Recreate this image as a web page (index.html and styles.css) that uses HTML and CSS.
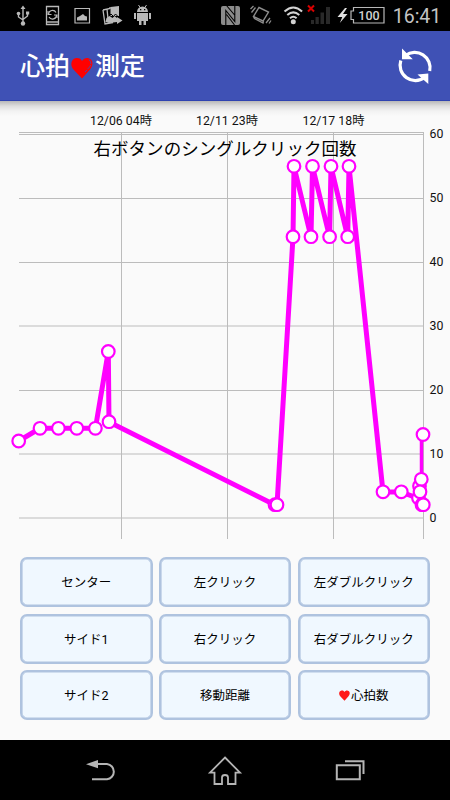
FILE: index.html
```html
<!DOCTYPE html>
<html lang="ja">
<head>
<meta charset="utf-8">
<title>心拍測定</title>
<link rel="stylesheet" href="styles.css">
</head>
<body>
<div class="screen">
  <div class="status">
    <svg class="notices" viewBox="0 0 160 31" fill="none" stroke="#b9b9b9">
      <g stroke-width="1.4"><path d="M23 8v15M18.500 13v4l4.500 3M27.500 13v3l-4.500 3.500"/><g fill="#b9b9b9" stroke="none"><path d="M20.500 9 23 5.500 25.500 9zM26 11.500h3.200v3H26z"/><circle cx="18.500" cy="13.500" r="1.800"/><circle cx="23" cy="23.500" r="2.200"/></g></g>
      <path d="M46.500 6.500h12v18h-12zM46.500 22h12" stroke-width="1.300"/>
      <path d="M48.500 14a4 4 0 0 1 7.500-1.500M56.500 15a4 4 0 0 1-7.500 2" stroke-width="1.200"/>
      <path d="M48 11v3.500h3.500M57 18v-3h-3" stroke-width="1.100"/>
      <path d="M75 8.500h14.500v14.500H75z" stroke-width="1.200"/><path d="M77 20.500v-3l3-1.500 3-2 2 2 2 .5v4z" fill="#b9b9b9" stroke="none"/>
      <path d="m110.500 7 8.500-1v10h-8.500z" fill="#b9b9b9" stroke="none"/><path d="m103 10 7-1.500V7M103 10l2 14 8-1.500M107 9l1 10" stroke-width="1.300"/>
      <path d="m105.500 22 1-4 3-2 3 2 2-2 2.500 2v-1l5.500 3.500-5.500 3.500v-2l-8 1z" fill="#b9b9b9" stroke="none"/><path d="m109 16 2-2 2.500 2.500 2-2.500 2.500 2.500" stroke="#000" stroke-width="1"/>
      <path d="M137 12a5.500 5.500 0 0 1 11 0zM137 13h11v8h-2v4h-2.500v-4h-2v4H139v-4h-2zM134 13h2v6h-2zM149 13h2v6h-2z" fill="#b9b9b9" stroke="none"/><path d="m138.500 5 2 3M146.500 5l-2 3" stroke-width="1"/><path d="M140 9h1.300v1.200H140zM144 9h1.300v1.200H144z" fill="#000" stroke="none"/>
    </svg>
    <svg class="signals" viewBox="216 0 234 31">
      <path d="M223 6h15q2 0 2 2v15q0 2-2 2h-15q-2 0-2-2V8q0-2 2-2z" fill="#8c8c8c"/><path d="M225.800 25V10.500l9 11V6M226.500 5.500l8.500 10M226.500 14.500l8 10.500" fill="none" stroke="#000" stroke-width="1.100"/>
      <g fill="none" stroke="#8c8c8c"><path d="m259 7.500 9.500 4.500-5.500 9-9.500-4.500zM253.500 16.500l1 2 8.500 4.500.5-2" stroke-width="1.400"/><path d="m250.500 9 3-3M251.500 12.500l4-5M266 23l4-5M269 23.500l2-3" stroke-width="1.300"/></g>
      <g fill="none" stroke="#d2d2d2" stroke-width="2"><path d="M284.500 11.500q8.800-8 17.600 0M287.300 15q6-5.200 12 0M290 18.300q3.300-3 6.600 0"/></g><circle cx="293.300" cy="21.800" r="2.500" fill="#d2d2d2"/>
      <path d="m308 5.500 6 6m0-6-6 6" stroke="#d80000" stroke-width="2"/><path d="M311 20h3v4h-3zM315.500 17h3.300v7h-3.300zM320.500 12.500h3.500V24h-3.500zM326 7h4v17h-4z" fill="#292929"/>
      <path d="m345 8-7.500 9h4.800l-2.500 6 7.700-9h-4.500l4-6z" fill="#e0e0e0"/>
      <path d="M353.500 7.500h30.500v15.500h-30.500v-3.500H351v-8.500h2.500z" fill="none" stroke="#b8b8b8" stroke-width="1.200"/>
      <text class="battery" x="369" y="19.500">100</text>
      <text class="clock" x="417" y="23">16:41</text>
    </svg>
  </div>
  <header class="bar">
    <h1>心拍<svg class="heart" viewBox="0 0 22 22"><path d="M11 21.500 2 12C-1 8 0 2 5 1c3-.4 5 .7 6 3 2-3.500 6-4 9-1.500 2.500 3 1.500 7-1 10z" fill="#f00"/><path d="M18 2.500q3.500 3.500.5 7.500l-4.500 5" fill="none" stroke="#3f51b5" stroke-width=".9" stroke-dasharray="5 1"/></svg>測定</h1>
    <svg class="sync" viewBox="0 0 36 36"><g fill="none" stroke="#fff" stroke-width="3.200"><path d="M8.500 7.500A15.300 15.300 0 0 1 32.700 23"/><path d="M27.500 29.500A15.300 15.300 0 0 1 3.800 12.500"/></g><path d="M5 .5 5 11.300 15.800 11.300zM31.300 36V25.500L20.500 26.500z" fill="#fff"/></svg>
  </header>
  <main>
    <svg class="chart" viewBox="0 101 450 447">
      <g class="grid"><path d="M19 132.500h404.500M19 134.500h404.500M19 198.500h404.500M19 262.500h404.500M19 326h404.500M19 390.500h404.500M19 454h404.500M19 518h404.500M121.500 133v406M227.500 133v406M333.500 133v406M423.500 132v407"/></g>
      <g class="axis middle"><text x="121" y="124.500" textLength="62">12/06 04時</text><text x="227" y="124.500" textLength="62">12/11 23時</text><text x="333.500" y="124.500" textLength="62">12/17 18時</text></g>
      <g class="axis"><text x="429.500" y="138">60</text><text x="429.500" y="202">50</text><text x="429.500" y="266">40</text><text x="429.500" y="330">30</text><text x="429.500" y="394">20</text><text x="429.500" y="458">10</text><text x="429.500" y="521.500">0</text></g>
      <path class="line" d="M18.700 441 40 428.300H95.400L108.300 351.500 109 422 275 505 277 505 293 237 294 166.500 311 237 312.500 166.500 329.600 237 331 166.500 347.700 237 349 166.500 383 492H401L417.500 498 419 486 421 479 420 492 422 505 423 505"/>
      <path class="line thin" d="M421.500 479V434.500"/>
      <g class="dots">
        <circle cx="18.700" cy="441" r="6.300"/><circle cx="40" cy="428.300" r="6.300"/><circle cx="58.400" cy="428.300" r="6.300"/><circle cx="76.800" cy="428.300" r="6.300"/><circle cx="95.400" cy="428.300" r="6.300"/><circle cx="108.300" cy="351.500" r="6.300"/><circle cx="109" cy="421.700" r="6.300"/><circle cx="275" cy="504.700" r="6.300"/><circle cx="277" cy="504.700" r="6.300"/>
        <circle cx="293" cy="236.700" r="6.300"/><circle cx="294" cy="166.300" r="6.300"/><circle cx="311" cy="236.700" r="6.300"/><circle cx="312.500" cy="166.300" r="6.300"/><circle cx="329.600" cy="236.700" r="6.300"/><circle cx="331" cy="166.300" r="6.300"/><circle cx="347.700" cy="236.700" r="6.300"/><circle cx="349" cy="166.300" r="6.300"/>
        <circle cx="383" cy="491.800" r="6.300"/><circle cx="401.300" cy="491.800" r="6.300"/><circle cx="418.500" cy="498" r="6.300"/><circle cx="419.500" cy="486" r="6.300"/><circle cx="421.300" cy="479.300" r="6.300"/><circle cx="420" cy="491.800" r="6.300"/><circle cx="422" cy="504.700" r="6.300"/><circle cx="423.300" cy="504.700" r="6.300"/><circle cx="423" cy="434.500" r="6.300"/>
      </g>
      <text class="caption" x="225" y="155" textLength="263">右ボタンのシングルクリック回数</text>
    </svg>
    <div class="buttons">
      <button>センター</button><button>左クリック</button><button>左ダブルクリック</button>
      <button>サイド1</button><button>右クリック</button><button>右ダブルクリック</button>
      <button>サイド2</button><button>移動距離</button><button><svg class="mini" viewBox="0 0 22 22"><path d="M11 21.500 2 12C-1 8 0 2 5 1c3-.4 5 .7 6 3 2-3.500 6-4 9-1.500 2.500 3 1.500 7-1 10z" fill="#ff1717"/></svg>心拍数</button>
    </div>
  </main>
  <nav>
    <svg viewBox="0 0 450 60" fill="none" stroke="#b5b5b5" stroke-width="2"><path d="M95 24h12a7.700 7.700 0 0 1 0 15.300H92"/><path d="M86 24.200 98 20v8.200z" fill="#b5b5b5" stroke="none"/><path d="m225 17.500 15 15.200h-4.500V44H228v-6.500q0-2.500-3-2.500t-3 2.500V44h-7.500V32.700H210z" stroke-width="1.800"/><path d="M336.800 25.200h23v14h-23zM345 21.300h18.500V34"/></svg>
  </nav>
</div>
</body>
</html>
```
FILE: styles.css
```css
body {
  margin: 0;
  font-family: Roboto, "Noto Sans CJK JP", sans-serif;
}

.screen {
  display: flex;
  flex-direction: column;
  width: 450px;
  height: 800px;
  overflow: hidden;
  background: #fafafa;
}

.status {
  display: flex;
  justify-content: space-between;
  height: 31px;
  background: #000;
}

.notices {
  width: 160px;
  height: 31px;
}

.signals {
  width: 234px;
  height: 31px;
}

.battery {
  font-size: 12.5px;
  font-weight: 500;
  fill: #d0d0d0;
  text-anchor: middle;
}

.clock {
  font-size: 19.5px;
  fill: #c4c4c4;
  text-anchor: middle;
}

.bar {
  box-sizing: border-box;
  display: flex;
  align-items: center;
  justify-content: space-between;
  height: 70px;
  padding: 0 17px 0 20px;
  background: #3f51b5;
  border-bottom: 1px solid #2f43b0;
}

h1 {
  display: flex;
  align-items: center;
  margin: 2px 0 0;
  font-size: 25px;
  line-height: 36px;
  font-weight: 500;
  color: #fff;
}

.heart {
  width: 22px;
  height: 22px;
  margin: 3px 2px 0 1px;
}

.sync {
  width: 36px;
  height: 36px;
}

main {
  height: 639px;
  background: linear-gradient(#b8b8b8, #dedede 5px, #f2f2f2 10px, #fafafa 15px);
}

.chart {
  display: block;
  width: 450px;
  height: 447px;
}

.grid {
  fill: none;
  stroke: #bcbcbc;
  stroke-width: 1;
}

.axis {
  font-size: 12.3px;
  fill: #111;
}

.middle {
  text-anchor: middle;
}

.caption {
  font-size: 17.5px;
  fill: #000;
  text-anchor: middle;
}

.line {
  fill: none;
  stroke: #f0f;
  stroke-width: 5;
}

.thin {
  stroke-width: 3.5;
}

.dots {
  fill: #fff;
  stroke: #f0f;
  stroke-width: 2.2;
}

.buttons {
  display: grid;
  grid-template-columns: repeat(3, 132.5px);
  grid-auto-rows: 50px;
  gap: 6.3px;
  padding: 9.3px 20px 0;
}

button {
  display: flex;
  align-items: center;
  justify-content: center;
  padding: 0 0 1px;
  border: 2px solid #afc3df;
  border-radius: 7px;
  background: #f0f8ff;
  box-shadow: inset 0 0 0 .6px #afc3df;
  font: inherit;
  font-size: 12.5px;
  color: #000;
}

.mini {
  width: 11px;
  height: 11px;
  margin: 3px 1px 0 0;
}

nav {
  height: 60px;
  background: #000;
}

nav svg {
  display: block;
  width: 450px;
  height: 60px;
}
```
